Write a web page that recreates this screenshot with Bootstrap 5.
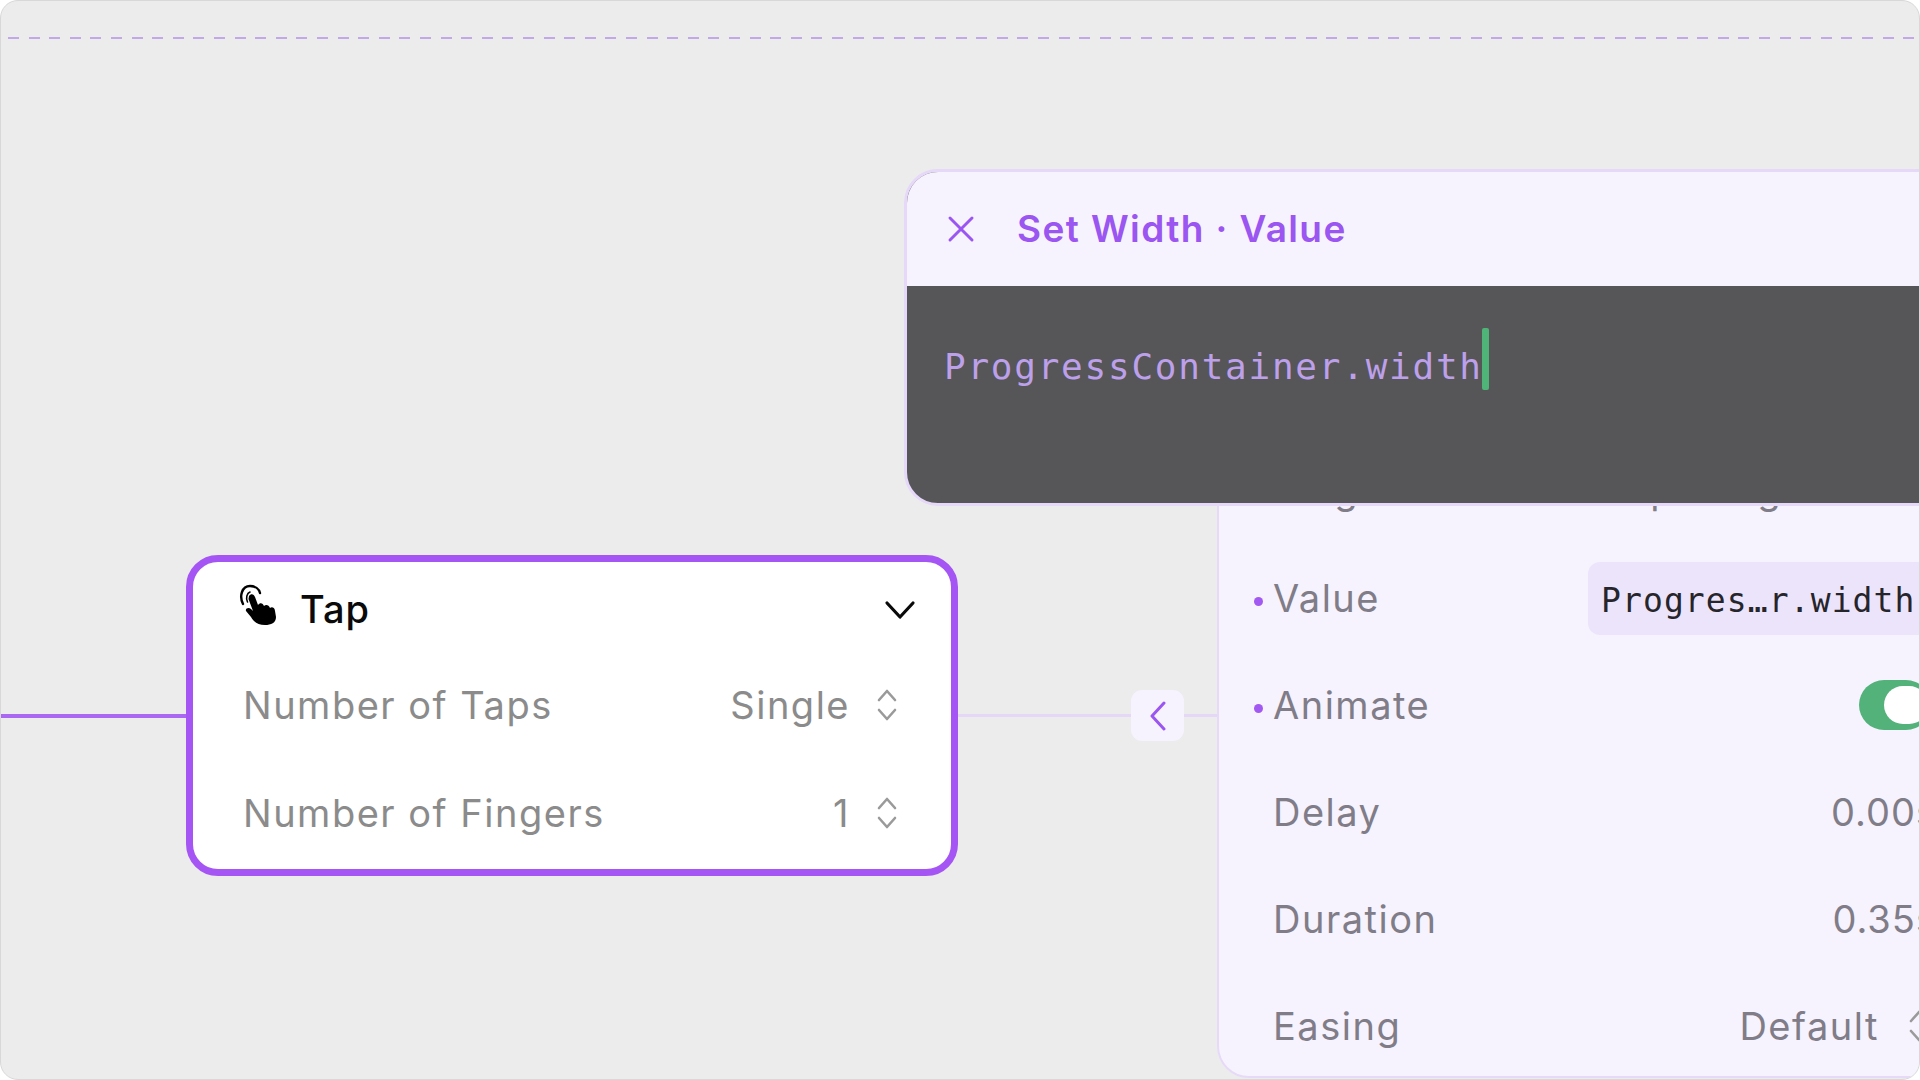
<!DOCTYPE html>
<html lang="en">
<head>
  <meta charset="UTF-8" />
  <meta name="viewport" content="width=device-width, initial-scale=1" />
  <title>Set Width Value</title>
  <link href="https://cdn.jsdelivr.net/npm/bootstrap@5.3.0/dist/css/bootstrap.min.css" rel="stylesheet" />
  <style>
    html, body { margin: 0; background: #fff; overflow: hidden; }
    body { font-family: Inter, "Liberation Sans", sans-serif; }
    .frame { width: 1920px; height: 1080px; background: #ececec; border: 1px solid #d8d8d8; border-radius: 18px; overflow: hidden; box-sizing: border-box; margin: 0; }
    .canvas { width: 1920px; height: 1080px; margin: -1px; }
    .dash-line { left: 8px; right: 0; top: 37px; height: 2px; background: repeating-linear-gradient(90deg, #c3a8e8 0 11px, transparent 11px 20.6px); }
    .wire-strong { left: 0; width: 190px; top: 714px; height: 4px; background: #aa68f2; }
    .wire-soft { left: 955px; width: 265px; top: 714px; height: 3px; background: #e4d8f6; }
    .tap-node { left: 186px; top: 555px; width: 772px; height: 321px; background: #fff; border: 7px solid #a455f3; border-radius: 32px; padding: 0 50px; z-index: 2; }
    .tap-head { height: 95px; margin-bottom: 4px; color: #0a0a0a; font-size: 38px; font-weight: 500; letter-spacing: 1px; }
    .tap-head svg.hand { margin-left: -5px; margin-right: 12px; margin-top: -8px; }
    .tap-head svg.fold { margin-right: -15px; }
    .node-row { height: 88px; margin-bottom: 20px; color: #8b8b8b; font-size: 38px; letter-spacing: 1.5px; white-space: nowrap; }
    .node-val { color: #8b8b8b; }
    .updown { margin-left: 26px; margin-right: 3px; }
    .back-btn { left: 1131px; top: 690px; width: 53px; height: 51px; background: #f6f3fe; border-radius: 11px; z-index: 2; }
    .side-panel { left: 1217px; top: 440px; width: 771px; height: 638px; background: #f6f3fe; border: 2px solid #e6daf8; border-radius: 0 0 32px 32px; padding: 4px 55px 0 54px; z-index: 1; }
    .panel-row { height: 88px; margin-bottom: 19px; color: #807d88; font-size: 38px; letter-spacing: 1.5px; white-space: nowrap; }
    .panel-row.first-row { margin-bottom: 20px; }
    .hidden-val { margin-right: 149px; }
    .time-val { margin-right: -6px; letter-spacing: 1px; }
    .dot-mark { display: inline-block; width: 9px; height: 9px; border-radius: 50%; background: #a259f2; margin-left: -19px; margin-right: 10px; vertical-align: 6px; }
    .value-pill { width: 343px; height: 73px; padding-left: 13px; background: #ece4fa; border-radius: 12px; color: #26252b; font-family: "DejaVu Sans Mono", "Liberation Mono", monospace; font-size: 33px; letter-spacing: 1.1px; line-height: 77px; overflow: hidden; }
    .toggle-on { width: 72px; height: 50px; background: #52b27a; border-radius: 25px; position: relative; overflow: hidden; }
    .toggle-knob { position: absolute; left: 25px; top: 6px; width: 44px; height: 38px; background: #fff; border-radius: 19px; }
    .easing-arrows { margin-left: 28px; }
    .expr-box { left: 904px; top: 169px; width: 1060px; height: 337px; border: 3px solid #e5d8f8; border-radius: 34px 0 0 34px; overflow: hidden; z-index: 3; background: #565558; }
    .expr-head { height: 114px; background: #f6f3fe; color: #9b55f0; font-size: 37px; font-weight: 600; letter-spacing: 1.4px; padding-left: 40px; }
    .expr-head svg { margin-right: 42px; }
    .expr-code { padding: 50px 0 0 37px; color: #bda0ea; font-family: "DejaVu Sans Mono", "Liberation Mono", monospace; font-size: 36px; letter-spacing: 1.75px; line-height: 62px; height: 217px; }
    .caret-bar { display: inline-block; width: 7px; height: 62px; background: #4fb477; border-radius: 2px; vertical-align: top; margin-top: -8px; margin-left: -1px; }
  </style>
</head>
<body>
  <div class="frame">
    <div class="canvas position-relative">
      <div class="dash-line position-absolute"></div>
      <div class="wire-strong position-absolute"></div>
      <div class="wire-soft position-absolute"></div>

      <!-- Tap node -->
      <div class="tap-node position-absolute">
        <div class="tap-head d-flex align-items-center">
          <svg class="hand" width="50" height="50" viewBox="16 12 50 50">
            <path d="M21 35C17 27 20 17 28 17C33 17 37 20 38 24" fill="none" stroke="#000" stroke-width="2.4" stroke-linecap="round"/>
            <path d="M25.500 33C23.500 29 25 24 28 23" fill="none" stroke="#000" stroke-width="1.600" stroke-linecap="round"/>
            <path d="M27 27C29 24 32 25 33 28L36 36C38 33 41 34 42 37C44 35 47 36 48 39C50 37 53 39 53 42L54 48C54 54 49 56 43 56C36 56 32 53 29 48L24 42C23 39 27 38 29 40L31 42L26.500 30Z" fill="#000"/>
          </svg>
          <span>Tap</span>
          <svg class="fold ms-auto" width="32" height="22" viewBox="0 0 32 22" fill="none" stroke="#0a0a0a" stroke-width="3.200" stroke-linecap="round" stroke-linejoin="round"><path d="M3 4L16 18L29 4"/></svg>
        </div>
        <div class="node-row d-flex justify-content-between align-items-center">
          <span>Number of Taps</span>
          <span class="node-val d-flex align-items-center">Single
            <svg class="updown" width="22" height="32" viewBox="0 0 22 32" fill="none" stroke="#9a9a9a" stroke-width="2.600" stroke-linecap="round" stroke-linejoin="round"><path d="M3 11L11 2L19 11M3 21L11 30L19 21"/></svg>
          </span>
        </div>
        <div class="node-row d-flex justify-content-between align-items-center">
          <span>Number of Fingers</span>
          <span class="node-val d-flex align-items-center">1
            <svg class="updown" width="22" height="32" viewBox="0 0 22 32" fill="none" stroke="#9a9a9a" stroke-width="2.600" stroke-linecap="round" stroke-linejoin="round"><path d="M3 11L11 2L19 11M3 21L11 30L19 21"/></svg>
          </span>
        </div>
      </div>

      <div class="back-btn position-absolute d-flex align-items-center justify-content-center">
        <svg width="18" height="30" viewBox="0 0 18 30" fill="none" stroke="#9b55f0" stroke-width="3" stroke-linecap="round" stroke-linejoin="round"><path d="M15 2L3 15L15 28"/></svg>
      </div>

      <!-- Side panel, mostly under the expression box at the top -->
      <div class="side-panel position-absolute">
        <div class="panel-row first-row d-flex justify-content-between align-items-center">
          <span>Target</span>
          <span class="hidden-val">Opening</span>
        </div>
        <div class="panel-row d-flex justify-content-between align-items-center">
          <span><span class="dot-mark"></span>Value</span>
          <span class="value-pill">Progres…r.width</span>
        </div>
        <div class="panel-row d-flex justify-content-between align-items-center">
          <span><span class="dot-mark"></span>Animate</span>
          <span class="toggle-on"><span class="toggle-knob"></span></span>
        </div>
        <div class="panel-row d-flex justify-content-between align-items-center">
          <span>Delay</span>
          <span class="time-val">0.00s</span>
        </div>
        <div class="panel-row d-flex justify-content-between align-items-center">
          <span>Duration</span>
          <span class="time-val">0.35s</span>
        </div>
        <div class="panel-row d-flex justify-content-between align-items-center">
          <span>Easing</span>
          <span class="d-flex align-items-center">Default
            <svg class="easing-arrows" width="24" height="32" viewBox="0 0 22 32" fill="none" stroke="#9a9a9a" stroke-width="2.600" stroke-linecap="round" stroke-linejoin="round"><path d="M3 11L11 2L19 11M3 21L11 30L19 21"/></svg>
          </span>
        </div>
      </div>

      <!-- Expression editor -->
      <div class="expr-box position-absolute">
        <div class="expr-head d-flex align-items-center">
          <svg width="28" height="28" viewBox="0 0 28 28" fill="none" stroke="#9b55f0" stroke-width="3" stroke-linecap="round"><path d="M3 3L25 25M25 3L3 25"/></svg>
          <span>Set Width · Value</span>
        </div>
        <div class="expr-code">ProgressContainer<span>.width</span><span class="caret-bar"></span></div>
      </div>
    </div>
  </div>
  <script src="https://cdn.jsdelivr.net/npm/bootstrap@5.3.0/dist/js/bootstrap.bundle.min.js"></script>
</body>
</html>
